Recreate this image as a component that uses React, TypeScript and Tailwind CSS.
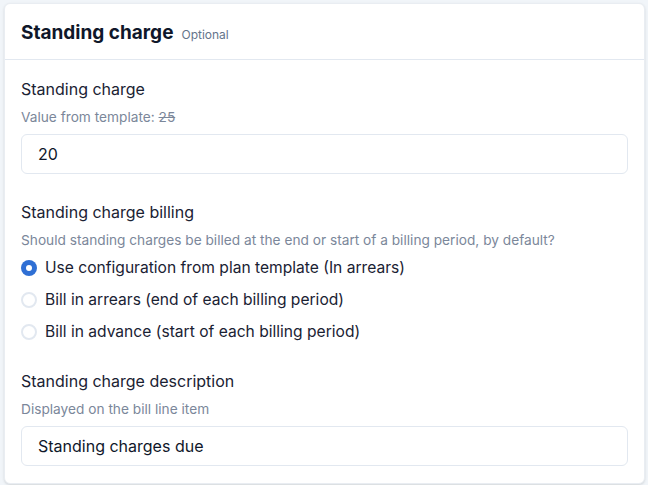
const FONT = "font-['Inter','DejaVu_Sans',sans-serif]";

// ── Radio row ──────────────────────────────────────
function Radio({ label, checked }: { label: string; checked?: boolean }) {
    return (
        <label className="flex items-center gap-2 h-8">
            {checked ? (
                <span className="w-4 h-4 rounded-full bg-[#2f6fd4] flex items-center justify-center shrink-0">
                    <span className="w-1.5 h-1.5 rounded-full bg-white" />
                </span>
            ) : (
                <span className="w-4 h-4 rounded-full border-2 border-[#e2e8f0] bg-white shrink-0" />
            )}
            <span className="text-[15.6px] text-[#1a2233] leading-6">{label}</span>
        </label>
    );
}

export default function App() {
    return (
        <div className={`min-h-[485px] bg-[#f1f5f9] px-[4px] pt-[3px] ${FONT}`}>
            <div className="bg-white rounded-md shadow-sm border border-[#e9edf2] w-[641px]">
                {/* Header */}
                <div className="h-[56px] px-4 pt-[3px] flex items-center gap-2 border-b border-[#e2e8f0]">
                    <h2 className="text-[19px] font-bold text-[#0f172a]">Standing charge</h2>
                    <span className="text-xs text-[#64748b] mt-1">Optional</span>
                </div>

                {/* Body */}
                <div className="px-4 pt-[17px] pb-[17px]">
                    <div className="text-[16px] leading-6 text-[#1a2233]">Standing charge</div>
                    <div className="mt-[6px] text-[13.7px] leading-5 text-[#7b879a]">
                        Value from template: <span className="line-through">25</span>
                    </div>
                    <div className="mt-[7px] h-[40px] rounded-md border border-[#e2e8f0] px-4 flex items-center text-[16px] text-[#0f172a]">
                        20
                    </div>

                    <div className="mt-[26px] text-[16px] leading-6 text-[#1a2233]">Standing charge billing</div>
                    <div className="mt-[6px] text-[13.7px] leading-5 text-[#7b879a]">
                        Should standing charges be billed at the end or start of a billing period, by default?
                    </div>
                    <div className="mt-[2px] flex flex-col">
                        <Radio checked label="Use configuration from plan template (In arrears)" />
                        <Radio label="Bill in arrears (end of each billing period)" />
                        <Radio label="Bill in advance (start of each billing period)" />
                    </div>

                    <div className="mt-[21px] text-[16px] leading-6 text-[#1a2233]">Standing charge description</div>
                    <div className="mt-[6px] text-[13.7px] leading-5 text-[#7b879a]">Displayed on the bill line item</div>
                    <div className="mt-[7px] h-[40px] rounded-md border border-[#e2e8f0] px-4 flex items-center text-[16px] text-[#0f172a]">
                        Standing charges due
                    </div>
                </div>
            </div>
        </div>
    );
}
